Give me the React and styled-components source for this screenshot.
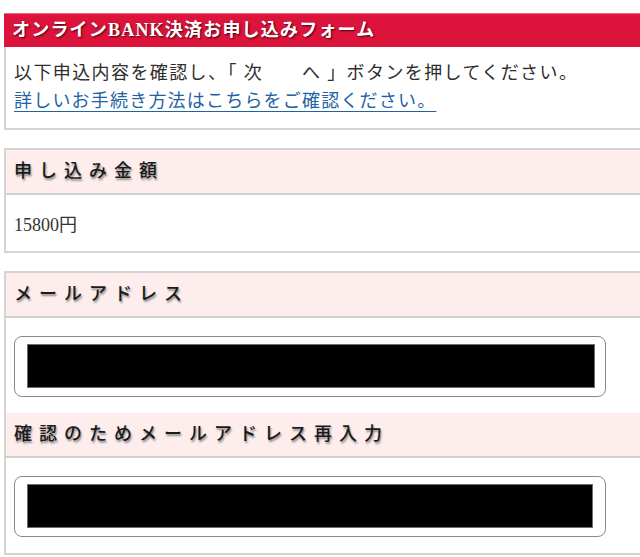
import React from "react";
import styled, { createGlobalStyle } from "styled-components";

const Global = createGlobalStyle`
  html, body {
    margin: 0;
    padding: 0;
    background: #ffffff;
  }
  body {
    font-family: "Liberation Serif", "Noto Sans CJK JP", serif;
    color: #333;
  }
`;

const Page = styled.div`
  padding: 13px 0 0 4px;
  display: flex;
  flex-direction: column;
  gap: 18px;
  overflow: hidden;
`;

const Card = styled.section`
  display: flex;
  flex-direction: column;
  border: 2px solid #d4d4d4;
  border-right: none;
  border-top: ${(p) => (p.$plain ? "none" : "2px solid #d4d4d4")};
  background: #fff;
`;

const TitleBar = styled.h1`
  margin: 0 0 0 -2px;
  height: 34px;
  box-sizing: border-box;
  border-top: 1px solid #ee6a7c;
  background: #dc143c;
  color: #fff;
  font-size: 18px;
  font-weight: 700;
  letter-spacing: 1.2px;
  line-height: 32px;
  padding-left: 8px;
  text-shadow: 1px 1px 2px #4a0010;
  white-space: nowrap;
`;

const Intro = styled.div`
  padding: 12px 8px 13px;
  font-size: 18px;
  line-height: 28px;
  letter-spacing: 1.4px;
  color: #2e2e2e;
  white-space: nowrap;
`;

const Line = styled.p`
  margin: 0;
`;

const Link = styled.a`
  color: #1f63a3;
  letter-spacing: 1.2px;
  text-decoration: underline;
  text-underline-offset: 4px;
  text-decoration-thickness: 1px;
`;

const SectionHeader = styled.h2`
  margin: 0;
  height: 45px;
  box-sizing: border-box;
  background: #fdeded;
  border-bottom: 2px solid #cfcfcf;
  padding-left: 8px;
  font-size: 18px;
  font-weight: 500;
  line-height: 43px;
  letter-spacing: 7px;
  color: #1a1a1a;
  text-shadow: 1px 2px 2px #8a8a8a;
  white-space: nowrap;
`;

const ValueRow = styled.div`
  height: 56px;
  padding-left: 8px;
  display: flex;
  align-items: center;
  font-size: 18px;
  color: #333;
`;

const FieldRow = styled.div`
  padding: 18px 0 16px 8px;
`;

const InputFrame = styled.div`
  width: 592px;
  box-sizing: border-box;
  border: 1.5px solid #8a8a8a;
  border-radius: 8px;
  padding: 7px ${(p) => p.$right}px 8px 12px;
  background: #fff;
`;

const MaskedInput = styled.input`
  display: block;
  width: 100%;
  box-sizing: border-box;
  height: 44px;
  margin: 0;
  padding: 0;
  border: 1px solid #6d6d6d;
  background: #000;
  color: #000;
  outline: none;
`;

export default function App() {
  return (
    <>
      <Global />
      <Page>
        <Card $plain>
          <TitleBar>オンラインBANK決済お申し込みフォーム</TitleBar>
          <Intro>
            <Line>以下申込内容を確認し、「 次　　へ 」ボタンを押してください。</Line>
            <Line>
              <Link href="#">詳しいお手続き方法はこちらをご確認ください。</Link>
            </Line>
          </Intro>
        </Card>

        <Card>
          <SectionHeader>申し込み金額</SectionHeader>
          <ValueRow>15800円</ValueRow>
        </Card>

        <Card>
          <SectionHeader>メールアドレス</SectionHeader>
          <FieldRow>
            <InputFrame $right={10}>
              <MaskedInput type="text" readOnly />
            </InputFrame>
          </FieldRow>
          <SectionHeader>確認のためメールアドレス再入力</SectionHeader>
          <FieldRow>
            <InputFrame $right={12}>
              <MaskedInput type="text" readOnly />
            </InputFrame>
          </FieldRow>
        </Card>
      </Page>
    </>
  );
}
